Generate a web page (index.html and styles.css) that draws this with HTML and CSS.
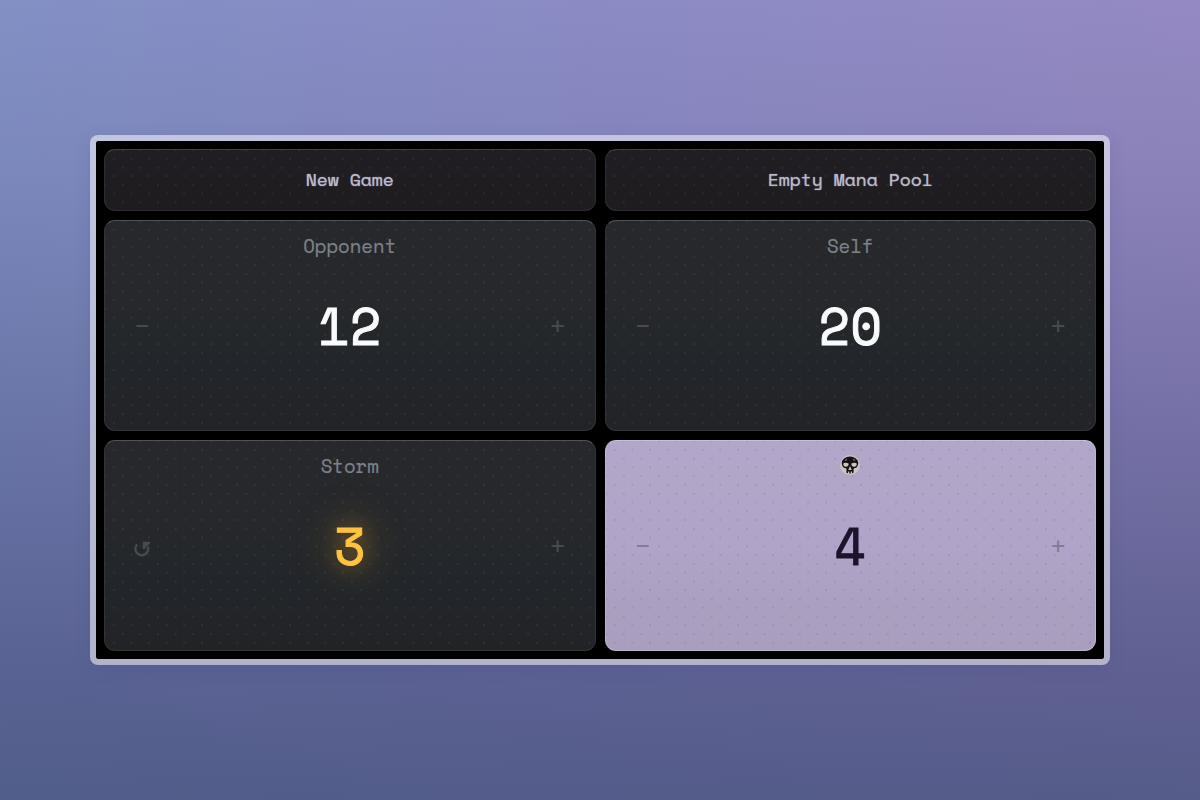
FILE: index.html
```html
<!DOCTYPE html>
<html lang="en">
<head>
<meta charset="utf-8">
<meta name="viewport" content="width=device-width, initial-scale=1">
<title>Life Counter</title>
<link rel="stylesheet" href="styles.css">
</head>
<body>
<main class="board">
  <button class="tile action" type="button">New Game</button>
  <button class="tile action" type="button">Empty Mana Pool</button>

  <section class="tile counter" aria-labelledby="opponent">
    <h2 class="label" id="opponent">Opponent</h2>
    <button class="step" type="button" aria-label="Decrease opponent life">−</button>
    <output class="value">12</output>
    <button class="step" type="button" aria-label="Increase opponent life">+</button>
  </section>

  <section class="tile counter" aria-labelledby="self">
    <h2 class="label" id="self">Self</h2>
    <button class="step" type="button" aria-label="Decrease own life">−</button>
    <output class="value">20</output>
    <button class="step" type="button" aria-label="Increase own life">+</button>
  </section>

  <section class="tile counter storm" aria-labelledby="storm">
    <h2 class="label" id="storm">Storm</h2>
    <button class="step" type="button" aria-label="Reset storm count">
      <svg class="reset" viewBox="0 0 18 18" aria-hidden="true"><path d="M4.200 4.500A6.300 6.300 0 1 0 14.600 6.500M11 9V3M9.800 3H17M11.500 6.500L15.500 3" fill="none" stroke="currentColor" stroke-width="2.500"/></svg>
    </button>
    <output class="value">3</output>
    <button class="step" type="button" aria-label="Increase storm count">+</button>
  </section>

  <section class="tile counter mana" aria-label="Black mana">
    <h2 class="label">
      <svg class="symbol" viewBox="0 0 40 40" role="img" aria-label="Black mana">
        <circle cx="20" cy="20" r="20" fill="#cbc4bf"/>
        <path d="M20 3C11 3 3.500 9 3.500 16C3.500 19 4.500 20.500 5 22C6 25.500 9 26 12 26.500C13.500 28 12.500 31 13 35.500L16 36.500V33H18.500V37H21.500V33H24V36.500L27 35.500C27.500 31 26.500 28 28 26.500C31 26 34 25.500 35 22C35.500 20.500 36.500 19 36.500 16C36.500 9 29 3 20 3Z" fill="#171216"/>
        <path d="M6.500 17C9 14.500 14 15 17 17C18 20.500 15.500 23.500 12 23.500C8.500 23.500 6 21 6.500 17ZM33.500 17C31 14.500 26 15 23 17C22 20.500 24.500 23.500 28 23.500C31.500 23.500 34 21 33.500 17ZM20 22L16.500 30H23.500Z" fill="#cbc4bf"/>
        <path d="M9.500 10.500L14 6.500L12.500 12ZM30.500 10.500L26 6.500L27.500 12Z" fill="#8d8788"/>
      </svg>
    </h2>
    <button class="step" type="button" aria-label="Decrease black mana">−</button>
    <output class="value">4</output>
    <button class="step" type="button" aria-label="Increase black mana">+</button>
  </section>
</main>
</body>
</html>
```
FILE: styles.css
```css
* {
  box-sizing: border-box;
}

body {
  margin: 0;
  min-height: 100vh;
  display: flex;
  align-items: center;
  justify-content: center;
  font-family: "Space Mono", "DejaVu Sans Mono", monospace;
  background:
    linear-gradient(180deg, rgba(64, 72, 118, 0) 0%, rgba(64, 72, 118, 0.1) 20%, rgba(64, 72, 118, 0.6) 80%, rgba(64, 76, 118, 0.75) 100%),
    linear-gradient(95deg, #8290c4 0%, #8c8bc4 50%, #9689c2 100%);
}

.board {
  width: 85%;
  display: grid;
  grid-template-columns: 1fr 1fr;
  gap: 9px;
  padding: 8px;
  border: 6px solid rgba(255, 255, 255, 0.52);
  border-radius: 8px;
  background: #000 padding-box;
  box-shadow: 0 4px 16px rgba(60, 60, 120, 0.15);
}

.tile {
  --dot: rgba(255, 255, 255, 0.06);
  --dot-height: 8%;
  --surface: linear-gradient(#27282c 0%, #26282b 40%, #22262a 70%, #222326 100%);
  border: 1px solid #323338;
  border-top-color: #505257;
  border-radius: 11px;
  background:
    radial-gradient(circle, var(--dot) 1px, transparent 1px) 0 0 / 3.6% var(--dot-height),
    radial-gradient(circle, var(--dot) 1px, transparent 1px) 9px 9px / 3.6% var(--dot-height),
    var(--surface) border-box;
}

.action {
  --surface: linear-gradient(#201e22, #1f1c20);
  --dot-height: 29%;
  min-height: 62px;
  padding: 0 0 2px;
  border-color: #2e2c31;
  border-top-color: #434147;
  color: #b9b9c8;
  font-family: inherit;
  font-size: 18px;
  line-height: 24px;
  text-shadow: 0 0 1px currentColor;
}

.counter {
  --dot-height: 8.4%;
  min-height: 211px;
  padding: 13px 0;
  display: grid;
  grid-template-columns: 74px 1fr 74px;
  grid-template-rows: 1fr auto 1fr;
}

.label {
  grid-column: 1 / -1;
  margin: 0;
  color: #7c8087;
  font-size: 19px;
  font-weight: 400;
  line-height: 24px;
  text-align: center;
  text-shadow: 0 0 1px rgba(124, 128, 135, 0.5);
}

.value {
  color: #f8fafb;
  font-size: 52px;
  line-height: 64px;
  text-align: center;
  -webkit-text-stroke: 1px currentColor;
}

.step {
  padding: 0;
  border: 0;
  background: none;
  color: #484a4f;
  font-family: inherit;
  font-size: 28px;
  line-height: 32px;
}

.reset {
  width: 18px;
  height: 18px;
  vertical-align: middle;
}

.storm .value {
  color: #ffc33f;
  text-shadow: 0 0 20px rgba(255, 180, 40, 0.4), 0 0 40px rgba(255, 180, 40, 0.7);
}

.mana {
  --dot: rgba(100, 80, 150, 0.18);
  --surface: linear-gradient(#b2a7c9 0%, #b0a5c8 50%, #aa9fbf 80%, #a99ebd 100%);
  border-color: #bcb3ce;
  border-top-color: #c8c0d8;
}

.mana .value {
  color: #1d142b;
}

.mana .step {
  color: #857b96;
}

.symbol {
  display: block;
  width: 20px;
  height: 20px;
  margin: 1px auto 3px;
}
```
